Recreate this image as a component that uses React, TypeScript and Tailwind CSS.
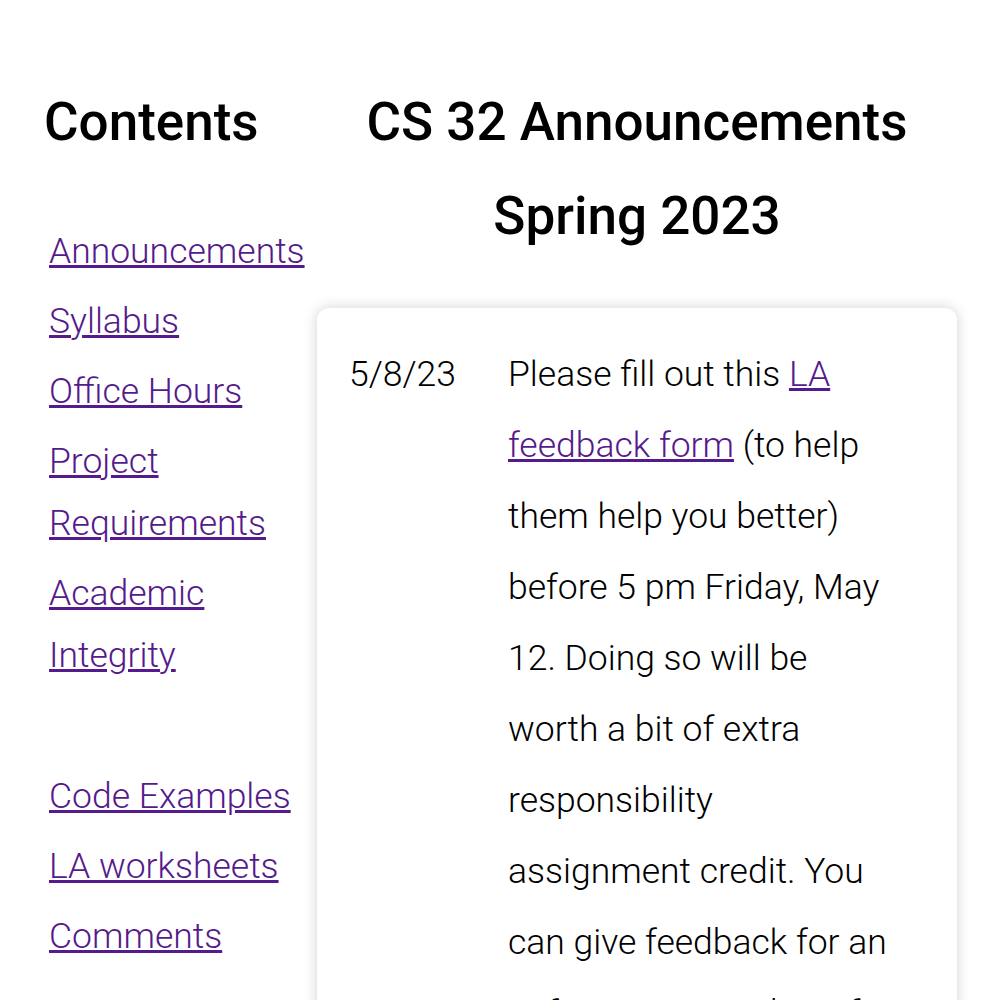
import React from "react";

const links = [
  "Announcements",
  "Syllabus",
  "Office Hours",
  "Project Requirements",
  "Academic Integrity",
];

const moreLinks = ["Code Examples", "LA worksheets", "Comments"];

function Sidebar() {
  return (
    <nav className="w-[317px] shrink-0 pl-[44px] pr-[10px]">
      <h2 className="text-[53px] font-medium leading-[94px] text-black">Contents</h2>
      <ul className="mt-[51px] pl-[5px] text-[35.5px] font-light leading-[62px]">
        {links.map((l) => (
          <li className="mb-[8px]" key={l}>
            <a className="text-[#551a8b] underline" href="#">
              {l}
            </a>
          </li>
        ))}
      </ul>
      <ul className="mt-[79px] pl-[5px] text-[35.5px] font-light leading-[62px]">
        {moreLinks.map((l) => (
          <li className="mb-[8px]" key={l}>
            <a className="text-[#551a8b] underline" href="#">
              {l}
            </a>
          </li>
        ))}
      </ul>
    </nav>
  );
}

export default function App() {
  return (
    <div
      className="flex min-h-screen bg-white pt-[75px] text-black"
      style={{ fontFamily: "Roboto, 'Liberation Sans', sans-serif" }}
    >
      <Sidebar />
      <main className="mr-[43px] flex-1">
        <h1 className="text-center text-[53px] font-medium leading-[94px]">
          CS 32 Announcements
          <br />
          Spring 2023
        </h1>
        <div className="mt-[45px] rounded-[12px] bg-white py-[31px] pl-[32px] pr-[33px] shadow-[0_0_14px_rgba(0,0,0,0.18)]">
          <div className="flex text-[35.5px] font-light leading-[71px]">
            <div className="w-[159px] shrink-0">5/8/23</div>
            <p className="w-[395px]">
              Please fill out this{" "}
              <a className="text-[#551a8b] underline" href="#">
                LA feedback form
              </a>{" "}
              (to help them help you better) before 5 pm Friday, May 12. Doing so will be worth a bit
              of extra responsibility assignment credit. You can give feedback for an unfortunate number
              of LAs here.
            </p>
          </div>
        </div>
      </main>
    </div>
  );
}
